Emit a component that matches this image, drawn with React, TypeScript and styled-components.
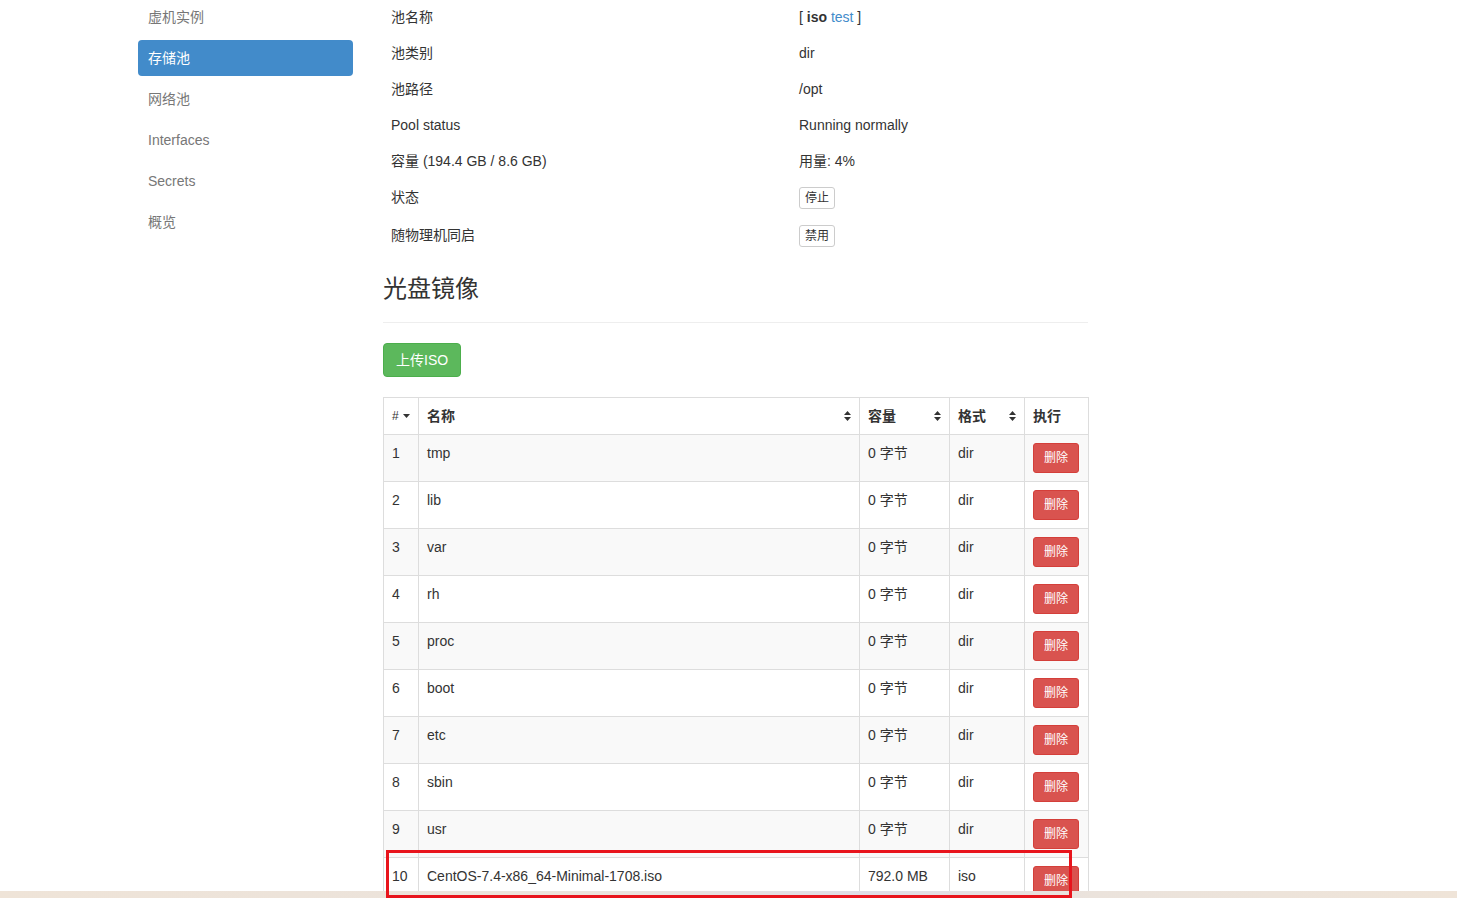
import styled, { createGlobalStyle } from "styled-components";

const GlobalStyle = createGlobalStyle`
  html, body {
    margin: 0;
    padding: 0;
    background: #fff;
    height: 898px;
    overflow: hidden;
  }
  body {
    font-family: "Liberation Sans", Arial, "Noto Sans CJK SC", sans-serif;
    font-size: 14px;
    line-height: 20px;
    color: #333;
  }
  * { box-sizing: border-box; }
`;

const Page = styled.div`
  display: flex;
  gap: 30px;
  padding-left: 138px;
  margin-top: -1px;
`;

const Sidebar = styled.ul`
  width: 215px;
  list-style: none;
  margin: 0;
  padding: 0;
  display: flex;
  flex-direction: column;
  gap: 5px;
`;

const NavItem = styled.li<{ $active?: boolean }>`
  height: 36px;
  padding: 8px 10px;
  border-radius: 4px;
  color: ${(p) => (p.$active ? "#fff" : "#777")};
  background: ${(p) => (p.$active ? "#428bca" : "transparent")};
`;

const Main = styled.div`
  width: 705px;
`;

const InfoTable = styled.table`
  width: 100%;
  border-collapse: collapse;
  td {
    padding: 8px;
    vertical-align: top;
    line-height: 20px;
  }
  td:first-child {
    width: 408px;
  }
`;

const Link = styled.a`
  color: #428bca;
  text-decoration: none;
`;

const SmallButton = styled.button`
  font-family: inherit;
  font-size: 12px;
  line-height: 18px;
  padding: 1px 5px;
  border: 1px solid #ccc;
  border-radius: 3px;
  background: #fff;
  color: #333;
  display: block;
`;

const Heading = styled.h3`
  font-size: 24px;
  line-height: 26px;
  font-weight: 400;
  margin: 21px 0 20px;
  padding-bottom: 20px;
  border-bottom: 1px solid #eee;
`;

const UploadButton = styled.button`
  font-family: inherit;
  font-size: 14px;
  line-height: 20px;
  padding: 6px 12px;
  color: #fff;
  background: #5cb85c;
  border: 1px solid #4cae4c;
  border-radius: 4px;
  display: block;
  margin-bottom: 20px;
`;

const Grid = styled.table`
  width: 100%;
  table-layout: fixed;
  border-collapse: collapse;
  th, td {
    border: 1px solid #ddd;
    padding: 8px;
    vertical-align: top;
    text-align: left;
    line-height: 20px;
  }
  th {
    font-weight: 700;
  }
  tbody tr:nth-child(odd) {
    background: #f9f9f9;
  }
`;

const HeadCell = styled.div`
  display: flex;
  align-items: center;
  justify-content: space-between;
`;

const HashCell = styled.div`
  display: flex;
  align-items: center;
  gap: 4px;
  font-weight: 400;
  font-size: 12px;
`;

const DeleteButton = styled.button`
  font-family: inherit;
  font-size: 12px;
  line-height: 18px;
  padding: 5px 10px;
  color: #fff;
  background: #d9534f;
  border: 1px solid #d43f3a;
  border-radius: 3px;
  display: block;
`;

/* red marker drawn around the freshly uploaded image row */
const Highlight = styled.div`
  position: absolute;
  left: 386px;
  top: 850px;
  width: 686px;
  height: 48px;
  border: 3px solid #e8141c;
  pointer-events: none;
  z-index: 2;
`;

const BottomEdge = styled.div`
  position: fixed;
  left: 0;
  right: 0;
  bottom: 0;
  height: 7px;
  z-index: 1;
  background: linear-gradient(90deg, #efe4d8 0%, #ebe3dc 40%, #dfdde6 60%, #ebe3dc 75%, #efe4d8 100%);
`;

const SortIcon = () => (
  <svg width="7" height="10" viewBox="0 0 7 10">
    <path d="M0 4 L3.5 0 L7 4 Z M0 6 L3.5 10 L7 6 Z" fill="#333" />
  </svg>
);

const Caret = () => (
  <svg width="7" height="4" viewBox="0 0 7 4">
    <path d="M0 0 L7 0 L3.5 4 Z" fill="#333" />
  </svg>
);

const navItems = ["虚机实例", "存储池", "网络池", "Interfaces", "Secrets", "概览"];

const volumes = [
  { name: "tmp", size: "0 字节", format: "dir" },
  { name: "lib", size: "0 字节", format: "dir" },
  { name: "var", size: "0 字节", format: "dir" },
  { name: "rh", size: "0 字节", format: "dir" },
  { name: "proc", size: "0 字节", format: "dir" },
  { name: "boot", size: "0 字节", format: "dir" },
  { name: "etc", size: "0 字节", format: "dir" },
  { name: "sbin", size: "0 字节", format: "dir" },
  { name: "usr", size: "0 字节", format: "dir" },
  { name: "CentOS-7.4-x86_64-Minimal-1708.iso", size: "792.0 MB", format: "iso" },
];

export default function App() {
  return (
    <>
      <GlobalStyle />
      <Page>
        <Sidebar>
          {navItems.map((item) => (
            <NavItem key={item} $active={item === "存储池"}>
              {item}
            </NavItem>
          ))}
        </Sidebar>
        <Main>
          <InfoTable>
            <tbody>
              <tr>
                <td>池名称</td>
                <td>
                  [ <b>iso</b> <Link href="#">test</Link> ]
                </td>
              </tr>
              <tr>
                <td>池类别</td>
                <td>dir</td>
              </tr>
              <tr>
                <td>池路径</td>
                <td>/opt</td>
              </tr>
              <tr>
                <td>Pool status</td>
                <td>Running normally</td>
              </tr>
              <tr>
                <td>容量 (194.4 GB / 8.6 GB)</td>
                <td>用量: 4%</td>
              </tr>
              <tr>
                <td>状态</td>
                <td>
                  <SmallButton>停止</SmallButton>
                </td>
              </tr>
              <tr>
                <td>随物理机同启</td>
                <td>
                  <SmallButton>禁用</SmallButton>
                </td>
              </tr>
            </tbody>
          </InfoTable>

          <Heading>光盘镜像</Heading>
          <UploadButton>上传ISO</UploadButton>

          <Grid>
            <colgroup>
              <col style={{ width: 35 }} />
              <col style={{ width: 441 }} />
              <col style={{ width: 90 }} />
              <col style={{ width: 75 }} />
              <col style={{ width: 64 }} />
            </colgroup>
            <thead>
              <tr>
                <th>
                  <HashCell>
                    # <Caret />
                  </HashCell>
                </th>
                <th>
                  <HeadCell>
                    名称 <SortIcon />
                  </HeadCell>
                </th>
                <th>
                  <HeadCell>
                    容量 <SortIcon />
                  </HeadCell>
                </th>
                <th>
                  <HeadCell>
                    格式 <SortIcon />
                  </HeadCell>
                </th>
                <th>执行</th>
              </tr>
            </thead>
            <tbody>
              {volumes.map((v, i) => (
                <tr key={v.name}>
                  <td>{i + 1}</td>
                  <td>{v.name}</td>
                  <td>{v.size}</td>
                  <td>{v.format}</td>
                  <td>
                    <DeleteButton>删除</DeleteButton>
                  </td>
                </tr>
              ))}
            </tbody>
          </Grid>
        </Main>
      </Page>
      <Highlight />
      <BottomEdge />
    </>
  );
}
